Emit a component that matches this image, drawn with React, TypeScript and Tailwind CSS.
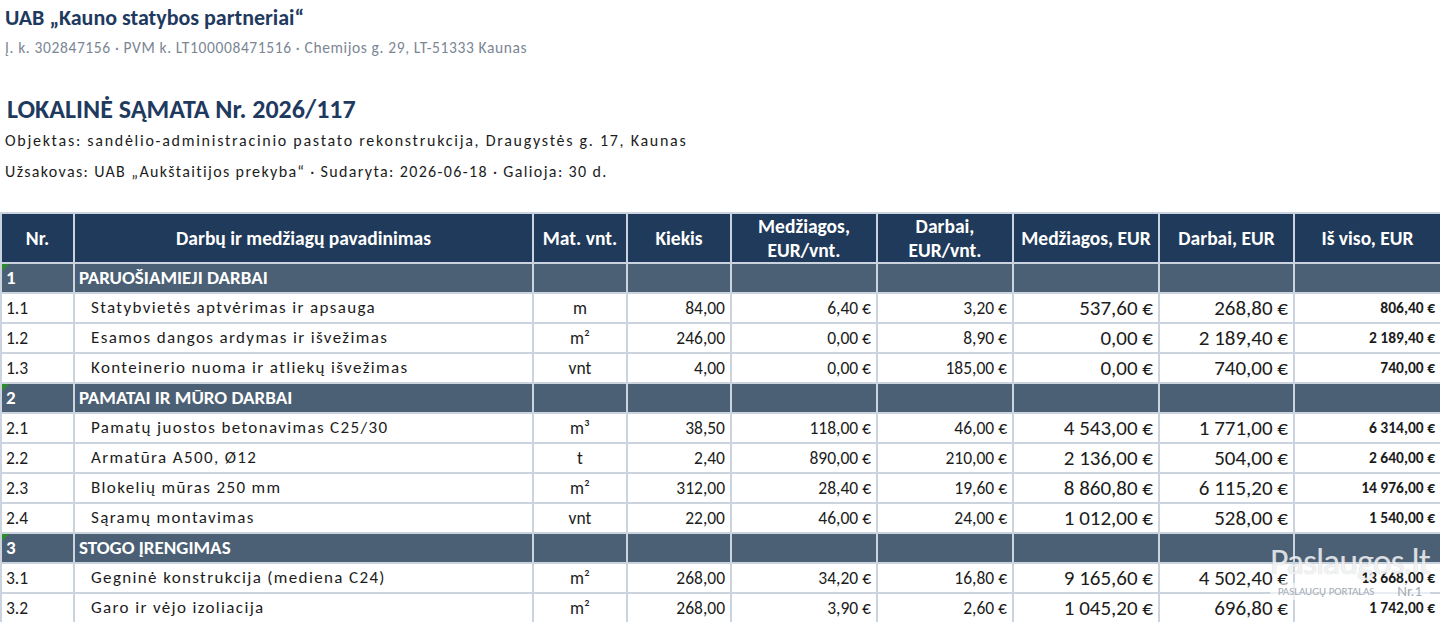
import React from "react";

type Row =
  | { kind: "section"; nr: string; title: string }
  | {
      kind: "item";
      nr: string;
      name: string;
      unit: string;
      qty: string;
      matUnit: string;
      workUnit: string;
      mat: string;
      work: string;
      total: string;
    };

const rows: Row[] = [
  { kind: "section", nr: "1", title: "PARUOŠIAMIEJI DARBAI" },
  { kind: "item", nr: "1.1", name: "Statybvietės aptvėrimas ir apsauga", unit: "m", qty: "84,00", matUnit: "6,40 €", workUnit: "3,20 €", mat: "537,60 €", work: "268,80 €", total: "806,40 €" },
  { kind: "item", nr: "1.2", name: "Esamos dangos ardymas ir išvežimas", unit: "m²", qty: "246,00", matUnit: "0,00 €", workUnit: "8,90 €", mat: "0,00 €", work: "2 189,40 €", total: "2 189,40 €" },
  { kind: "item", nr: "1.3", name: "Konteinerio nuoma ir atliekų išvežimas", unit: "vnt", qty: "4,00", matUnit: "0,00 €", workUnit: "185,00 €", mat: "0,00 €", work: "740,00 €", total: "740,00 €" },
  { kind: "section", nr: "2", title: "PAMATAI IR MŪRO DARBAI" },
  { kind: "item", nr: "2.1", name: "Pamatų juostos betonavimas C25/30", unit: "m³", qty: "38,50", matUnit: "118,00 €", workUnit: "46,00 €", mat: "4 543,00 €", work: "1 771,00 €", total: "6 314,00 €" },
  { kind: "item", nr: "2.2", name: "Armatūra A500, Ø12", unit: "t", qty: "2,40", matUnit: "890,00 €", workUnit: "210,00 €", mat: "2 136,00 €", work: "504,00 €", total: "2 640,00 €" },
  { kind: "item", nr: "2.3", name: "Blokelių mūras 250 mm", unit: "m²", qty: "312,00", matUnit: "28,40 €", workUnit: "19,60 €", mat: "8 860,80 €", work: "6 115,20 €", total: "14 976,00 €" },
  { kind: "item", nr: "2.4", name: "Sąramų montavimas", unit: "vnt", qty: "22,00", matUnit: "46,00 €", workUnit: "24,00 €", mat: "1 012,00 €", work: "528,00 €", total: "1 540,00 €" },
  { kind: "section", nr: "3", title: "STOGO ĮRENGIMAS" },
  { kind: "item", nr: "3.1", name: "Gegninė konstrukcija (mediena C24)", unit: "m²", qty: "268,00", matUnit: "34,20 €", workUnit: "16,80 €", mat: "9 165,60 €", work: "4 502,40 €", total: "13 668,00 €" },
  { kind: "item", nr: "3.2", name: "Garo ir vėjo izoliacija", unit: "m²", qty: "268,00", matUnit: "3,90 €", workUnit: "2,60 €", mat: "1 045,20 €", work: "696,80 €", total: "1 742,00 €" },
];

// Excel-like grid: light blue-grey 2px lines
const cell = "border-2 border-[#cbd4de] px-[5px] whitespace-nowrap";

function SectionRow({ nr, title }: { nr: string; title: string }) {
  return (
    <tr className="h-[30px] bg-[#4b6075] text-[19px] font-bold leading-[24px] text-white">
      <td className={`${cell} relative pl-[4px]`}>
        <span className="absolute left-0 top-0 h-0 w-0 border-t-[7px] border-r-[7px] border-t-[#2e8b2e] border-r-transparent" />
        {nr}
      </td>
      <td className={`${cell} pl-[4px]`}>{title}</td>
      {Array.from({ length: 7 }).map((_, i) => (
        <td key={i} className={cell} />
      ))}
    </tr>
  );
}

export default function App() {
  return (
    <div
      className="relative h-[622px] w-[1440px] overflow-hidden bg-white text-[#1c1c1c]"
      style={{ fontFamily: "Carlito, Calibri, Lato, 'Open Sans', sans-serif" }}
    >
      <div className="px-[5px]">
        <div className="flex h-[35px] items-center text-[22px] font-bold text-[#1f3a5f]">
          UAB „Kauno statybos partneriai“
        </div>
        <div className="flex h-[26px] items-center text-[15.5px] tracking-[0.04em] text-[#7b8694]">
          Į. k. 302847156 · PVM k. LT100008471516 · Chemijos g. 29, LT-51333 Kaunas
        </div>
        <div className="mt-[32px] flex h-[32px] items-center pl-[2px] text-[26px] font-bold text-[#1f3a5f]">
          LOKALINĖ SĄMATA Nr. 2026/117
        </div>
        <div className="flex h-[32px] items-center text-[16px] tracking-[0.108em]">
          Objektas: sandėlio-administracinio pastato rekonstrukcija, Draugystės g. 17, Kaunas
        </div>
        <div className="flex h-[30px] items-center text-[16px] tracking-[0.085em]">
          Užsakovas: UAB „Aukštaitijos prekyba“ · Sudaryta: 2026-06-18 · Galioja: 30 d.
        </div>
      </div>

      <table className="mt-[25px] w-[1440px] table-fixed border-collapse">
        <colgroup>
          <col className="w-[73px]" />
          <col className="w-[459px]" />
          <col className="w-[94px]" />
          <col className="w-[104px]" />
          <col className="w-[146px]" />
          <col className="w-[136px]" />
          <col className="w-[146px]" />
          <col className="w-[135px]" />
          <col className="w-[147px]" />
        </colgroup>
        <thead>
          <tr className="h-[50px] bg-[#1f3a5a] text-center text-[19.5px] font-bold leading-[24px] text-white">
            <th className={cell}>Nr.</th>
            <th className={cell}>Darbų ir medžiagų pavadinimas</th>
            <th className={cell}>Mat. vnt.</th>
            <th className={cell}>Kiekis</th>
            <th className={cell}>
              Medžiagos,
              <br />
              EUR/vnt.
            </th>
            <th className={cell}>
              Darbai,
              <br />
              EUR/vnt.
            </th>
            <th className={cell}>Medžiagos, EUR</th>
            <th className={cell}>Darbai, EUR</th>
            <th className={cell}>Iš viso, EUR</th>
          </tr>
        </thead>
        <tbody>
          {rows.map((r) =>
            r.kind === "section" ? (
              <SectionRow key={r.nr} nr={r.nr} title={r.title} />
            ) : (
              <tr key={r.nr} className="h-[30px] text-[17.5px] leading-[24px]">
                <td className={`${cell} pl-[4px]`}>{r.nr}</td>
                <td className={`${cell} pl-[16px] text-[17px] tracking-[0.08em]`}>{r.name}</td>
                <td className={`${cell} text-center`}>{r.unit}</td>
                <td className={`${cell} text-right`}>{r.qty}</td>
                <td className={`${cell} text-right`}>{r.matUnit}</td>
                <td className={`${cell} text-right`}>{r.workUnit}</td>
                <td className={`${cell} text-right text-[21px]`}>{r.mat}</td>
                <td className={`${cell} text-right text-[21px]`}>{r.work}</td>
                <td className={`${cell} text-right text-[15.5px] font-bold`}>{r.total}</td>
              </tr>
            )
          )}
        </tbody>
      </table>

      {/* site watermark over the bottom-right corner */}
      <div className="pointer-events-none absolute left-[1270px] top-[541px] flex flex-col items-start">
        <div className="text-[36px] leading-[42px] tracking-[-0.03em] text-white/80 [text-shadow:0_0_1px_rgba(60,70,80,0.35)]">
          Paslaugos.lt
        </div>
        <div className="flex w-[160px] items-center justify-between bg-white/60 px-[8px] text-[11px] leading-[17px] text-[#a3abb4]">
          <span>PASLAUGŲ PORTALAS</span>
          <span className="text-[15px]">Nr.1</span>
        </div>
      </div>
    </div>
  );
}
